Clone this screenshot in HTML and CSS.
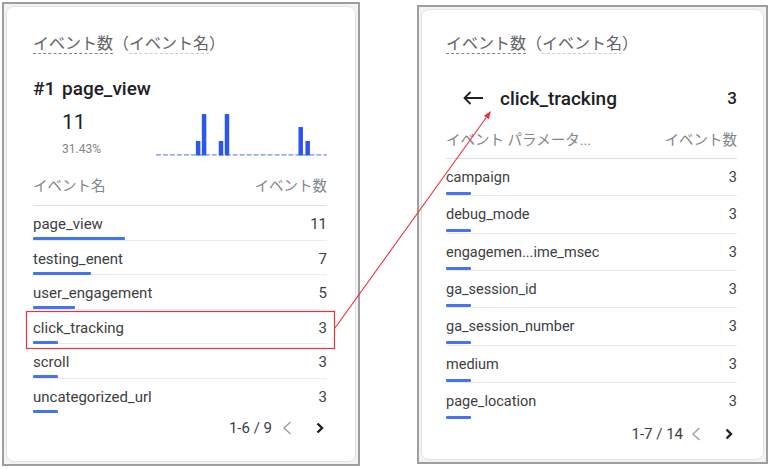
FILE: index.html
```html
<!DOCTYPE html>
<html lang="ja">
<head>
    <meta charset="UTF-8">
    <meta name="viewport" content="width=device-width, initial-scale=1.0">
    <title>イベント数（イベント名）</title>
    <link rel="stylesheet" href="styles.css">
</head>
<body>
    <div class="page">
        <!-- 左: イベント名ごとのカード -->
        <section class="shot shot-left">
            <div class="card">
                <div class="card-title"><span class="dim">イベント数</span>（<span class="dim dim-light">イベント名</span>）</div>

                <div class="kpi-head">
                    <span class="kpi-rank">#1</span>
                    <span class="kpi-name">page_view</span>
                </div>
                <div class="kpi-body">
                    <div class="kpi-value">
                        <div class="kpi-num">11</div>
                        <div class="kpi-pct">31.43%</div>
                    </div>
                    <svg class="spark" width="172" height="46" viewBox="0 0 172 46">
                        <line x1="0" y1="44" x2="172" y2="44" stroke="#6f93f3" stroke-width="1.3" stroke-dasharray="5 2"/>
                        <rect x="40" y="30" width="4.5" height="14.5" fill="#2b57ee"/>
                        <rect x="46" y="3" width="4.5" height="41.5" fill="#2b57ee"/>
                        <rect x="63" y="30" width="4.5" height="14.5" fill="#2b57ee"/>
                        <rect x="69" y="3" width="4.5" height="41.5" fill="#2b57ee"/>
                        <rect x="143" y="16" width="4.5" height="28.5" fill="#2b57ee"/>
                        <rect x="150" y="30" width="4.5" height="14.5" fill="#2b57ee"/>
                    </svg>
                </div>

                <div class="tbl">
                    <div class="tbl-head"><span>イベント名</span><span>イベント数</span></div>
                    <div class="tbl-row">
                        <div class="tbl-line"><span>page_view</span><span>11</span></div>
                        <div class="bar" style="width: 92px;"></div>
                    </div>
                    <div class="tbl-row">
                        <div class="tbl-line"><span>testing_enent</span><span>7</span></div>
                        <div class="bar" style="width: 58px;"></div>
                    </div>
                    <div class="tbl-row">
                        <div class="tbl-line"><span>user_engagement</span><span>5</span></div>
                        <div class="bar" style="width: 42px;"></div>
                    </div>
                    <div class="tbl-row">
                        <div class="tbl-line"><span>click_tracking</span><span>3</span></div>
                        <div class="bar" style="width: 25px;"></div>
                    </div>
                    <div class="tbl-row">
                        <div class="tbl-line"><span>scroll</span><span>3</span></div>
                        <div class="bar" style="width: 25px;"></div>
                    </div>
                    <div class="tbl-row">
                        <div class="tbl-line"><span>uncategorized_url</span><span>3</span></div>
                        <div class="bar" style="width: 25px;"></div>
                    </div>
                </div>

                <div class="pager">
                    <span>1-6 / 9</span>
                    <svg class="chev prev" width="16" height="16" viewBox="0 0 16 16"><path d="M11.5 2 L5 8 L11.5 14" fill="none" stroke="#9aa0a6" stroke-width="1.4"/></svg>
                    <svg class="chev next" width="16" height="16" viewBox="0 0 16 16"><path d="M5.5 3.5 L10 8 L5.5 12.5" fill="none" stroke="#202124" stroke-width="2.4"/></svg>
                </div>
            </div>
        </section>

        <!-- 右: click_tracking のパラメータ -->
        <section class="shot shot-right">
            <div class="card">
                <div class="card-title"><span class="dim">イベント数</span>（<span class="dim dim-light">イベント名</span>）</div>

                <div class="back-row">
                    <svg class="back" width="22" height="16" viewBox="0 0 22 16"><path d="M21 8 H2.5 M8.5 2 L2.5 8 L8.5 14" fill="none" stroke="#202124" stroke-width="1.8"/></svg>
                    <span class="back-name">click_tracking</span>
                    <span class="back-num">3</span>
                </div>

                <div class="tbl">
                    <div class="tbl-head"><span>イベント パラメータ...</span><span>イベント数</span></div>
                    <div class="tbl-row">
                        <div class="tbl-line"><span>campaign</span><span>3</span></div>
                        <div class="bar" style="width: 25px;"></div>
                    </div>
                    <div class="tbl-row">
                        <div class="tbl-line"><span>debug_mode</span><span>3</span></div>
                        <div class="bar" style="width: 25px;"></div>
                    </div>
                    <div class="tbl-row">
                        <div class="tbl-line"><span>engagemen...ime_msec</span><span>3</span></div>
                        <div class="bar" style="width: 25px;"></div>
                    </div>
                    <div class="tbl-row">
                        <div class="tbl-line"><span>ga_session_id</span><span>3</span></div>
                        <div class="bar" style="width: 25px;"></div>
                    </div>
                    <div class="tbl-row">
                        <div class="tbl-line"><span>ga_session_number</span><span>3</span></div>
                        <div class="bar" style="width: 25px;"></div>
                    </div>
                    <div class="tbl-row">
                        <div class="tbl-line"><span>medium</span><span>3</span></div>
                        <div class="bar" style="width: 25px;"></div>
                    </div>
                    <div class="tbl-row">
                        <div class="tbl-line"><span>page_location</span><span>3</span></div>
                        <div class="bar" style="width: 25px;"></div>
                    </div>
                </div>

                <div class="pager">
                    <span>1-7 / 14</span>
                    <svg class="chev prev" width="16" height="16" viewBox="0 0 16 16"><path d="M11.5 2 L5 8 L11.5 14" fill="none" stroke="#9aa0a6" stroke-width="1.4"/></svg>
                    <svg class="chev next" width="16" height="16" viewBox="0 0 16 16"><path d="M5.5 3.5 L10 8 L5.5 12.5" fill="none" stroke="#202124" stroke-width="2.4"/></svg>
                </div>
            </div>
        </section>
    </div>

    <!-- 赤い注釈 -->
    <svg class="overlay" width="771" height="469" viewBox="0 0 771 469">
        <rect x="26.5" y="311.5" width="308" height="37" fill="none" stroke="#e8333f" stroke-width="1.2"/>
        <line x1="335" y1="328" x2="486.3" y2="117.5" stroke="#e8333f" stroke-width="1.1"/>
        <polygon points="491,111 488.8,119.3 483.9,115.7" fill="#e8333f"/>
    </svg>
</body>
</html>
```

FILE: styles.css
```css
* {
    box-sizing: border-box;
    margin: 0;
    padding: 0;
}

body {
    font-family: Roboto, "Noto Sans CJK JP", sans-serif;
    background-color: #fff;
    color: #3c4043;
    width: 771px;
    height: 469px;
    overflow: hidden;
    position: relative;
}

.page {
    display: flex;
    align-items: flex-start;
    gap: 57px;
    padding: 2px 0 0 2px;
}

.shot {
    border: 2px solid #9e9e9e;
    padding: 2px;
    background-color: #f1f3f4;
}

.shot-left {
    width: 358px;
    height: 464px;
}

.shot-right {
    width: 351px;
    height: 459px;
    margin-top: 3px;
}

.card {
    height: 100%;
    background-color: #fff;
    border: 1px solid #e3e3e3;
    border-radius: 8px;
}

.shot-left .card {
    padding: 26px 28px 0 26px;
}

.shot-right .card {
    padding: 23px 26px 0 24px;
}

.card-title {
    font-size: 16px;
    line-height: 22px;
    height: 22px;
    color: #5f6368;
}

.dim {
    border-bottom: 1px dashed #80868b;
}

.dim-light {
    border-bottom-color: #c9cbcd;
}

/* KPI */
.kpi-head {
    display: flex;
    margin-top: 22px;
    font-size: 19px;
    line-height: 24px;
    font-weight: 500;
    color: #202124;
}

.kpi-rank {
    width: 29px;
}

.kpi-body {
    display: flex;
    align-items: flex-start;
    padding-left: 29px;
}

.kpi-value {
    width: 94px;
    padding-top: 8px;
}

.kpi-num {
    font-size: 21px;
    line-height: 26px;
    color: #202124;
}

.kpi-pct {
    margin-top: 6px;
    font-size: 12px;
    line-height: 16px;
    color: #80868b;
}

.spark {
    display: block;
    margin-top: 10px;
}

/* テーブル */
.tbl-head {
    display: flex;
    justify-content: space-between;
    font-size: 14.5px;
    line-height: 18px;
    color: #80868b;
    border-bottom: 1px solid #e0e0e0;
}

.shot-left .tbl-head {
    margin-top: 21px;
    padding-bottom: 9px;
}

.shot-right .tbl-head {
    margin-top: 22px;
    padding-bottom: 8px;
}

.tbl-row {
    border-bottom: 1px solid #e8eaed;
}

.tbl-row:last-child {
    border-bottom: none;
}

.tbl-line {
    display: flex;
    justify-content: space-between;
    line-height: 18px;
}

.shot-left .tbl-row {
    height: 34.6px;
    padding-top: 9px;
}

.shot-left .tbl-line {
    font-size: 15px;
}

.shot-right .tbl-row {
    height: 37.33px;
    padding-top: 10px;
}

.shot-right .tbl-line {
    font-size: 14.5px;
}

.bar {
    height: 3px;
    margin-top: 4px;
    background-color: #4374f2;
    border-radius: 1px;
}

.shot-right .bar {
    margin-top: 5px;
}

/* 戻る */
.back-row {
    display: flex;
    align-items: center;
    margin-top: 31px;
    height: 24px;
    color: #202124;
    font-weight: 500;
}

.back {
    margin-left: 16px;
    margin-right: 16px;
}

.back-name {
    flex: 1;
    font-size: 19px;
}

.back-num {
    font-size: 17px;
}

/* ページャー */
.pager {
    display: flex;
    justify-content: flex-end;
    align-items: center;
    height: 20px;
    font-size: 15px;
    color: #3c4043;
}

.shot-left .pager {
    margin-top: 4px;
    margin-right: -1px;
}

.shot-right .pager {
    margin-top: 4px;
}

.chev {
    display: block;
}

.prev {
    margin-left: 7px;
}

.next {
    margin-left: 17px;
}

.shot-right .prev {
    margin-left: 5px;
}

.overlay {
    position: absolute;
    top: 0;
    left: 0;
    pointer-events: none;
}
```
